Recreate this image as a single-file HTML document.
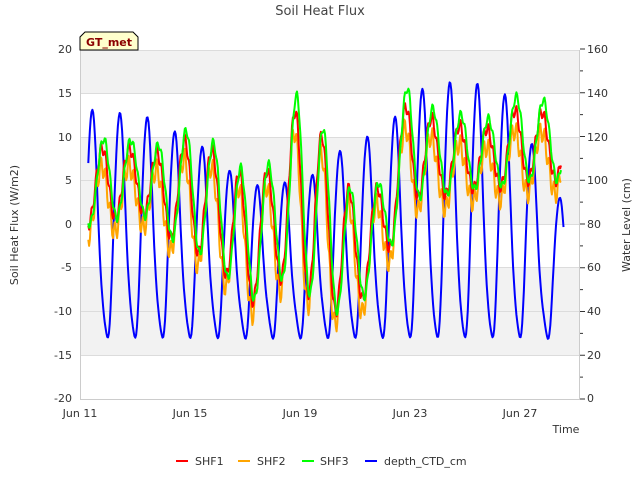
<!DOCTYPE html>
<html><head><meta charset="utf-8"><style>
body{margin:0;background:#fff;}
svg{display:block;font-family:"DejaVu Sans","Liberation Sans",sans-serif;}
</style></head><body>
<svg id="s" width="640" height="480" viewBox="0 0 640 480">
<rect width="640" height="480" fill="#fff"/>
<rect x="80" y="50" width="500" height="44" fill="#f2f2f2"/>
<rect x="80" y="137" width="500" height="87" fill="#f2f2f2"/>
<rect x="80" y="268" width="500" height="87" fill="#f2f2f2"/>
<g stroke="#dcdcdc" stroke-width="1">
<line x1="80" x2="580" y1="93.5" y2="93.5"/><line x1="80" x2="580" y1="137.5" y2="137.5"/>
<line x1="80" x2="580" y1="180.5" y2="180.5"/><line x1="80" x2="580" y1="224.5" y2="224.5"/>
<line x1="80" x2="580" y1="267.5" y2="267.5"/><line x1="80" x2="580" y1="311.5" y2="311.5"/>
<line x1="80" x2="580" y1="355.5" y2="355.5"/><line x1="80" x2="580" y1="50.5" y2="50.5"/>
</g>
<g id="lines" fill="none" stroke-width="2" stroke-linejoin="round"></g>
<g stroke="#ccc" fill="none"><line x1="80.5" y1="50" x2="80.5" y2="399"/><line x1="80" y1="399.5" x2="580" y2="399.5"/><line x1="579.5" y1="50" x2="579.5" y2="399"/></g>
<g stroke="#333" id="rt"></g>
<g font-size="11" fill="#333" text-anchor="end">
<text x="72" y="53">20</text><text x="72" y="97">15</text><text x="72" y="141">10</text><text x="72" y="184">5</text><text x="72" y="228">0</text><text x="72" y="271">-5</text><text x="72" y="315">-10</text><text x="72" y="359">-15</text><text x="72" y="402">-20</text>
</g>
<g font-size="11" fill="#333">
<text x="587" y="53">160</text><text x="587" y="97">140</text><text x="587" y="141">120</text><text x="587" y="184">100</text><text x="587" y="228">80</text><text x="587" y="271">60</text><text x="587" y="315">40</text><text x="587" y="359">20</text><text x="587" y="402">0</text>
</g>
<g font-size="11" fill="#333" text-anchor="middle">
<text x="80" y="417">Jun 11</text><text x="190" y="417">Jun 15</text><text x="300" y="417">Jun 19</text><text x="410" y="417">Jun 23</text><text x="520" y="417">Jun 27</text>
<text x="566" y="433">Time</text>
<text x="320" y="15" font-size="13" fill="#444">Soil Heat Flux</text>
<text transform="translate(18,225) rotate(-90)">Soil Heat Flux (W/m2)</text>
<text transform="translate(630,225) rotate(-90)">Water Level (cm)</text>
</g>
<path d="M80,50 V37 L85,32 H133 L138,37 V50 Z" fill="#ffffcc" stroke="#000"/>
<text x="109" y="46" font-size="11" font-weight="bold" fill="#8b0000" text-anchor="middle">GT_met</text>
<g font-size="11" fill="#333">
<line x1="176" x2="188" y1="461" y2="461" stroke="#f00" stroke-width="2"/><text x="195" y="465">SHF1</text>
<line x1="238" x2="250" y1="461" y2="461" stroke="#ffa500" stroke-width="2"/><text x="257" y="465">SHF2</text>
<line x1="302" x2="314" y1="461" y2="461" stroke="#0f0" stroke-width="2"/><text x="320" y="465">SHF3</text>
<line x1="365" x2="377" y1="461" y2="461" stroke="#00f" stroke-width="2"/><text x="384" y="465">depth_CTD_cm</text>
</g>
</svg>
<script>
var NS="http://www.w3.org/2000/svg";
var rt=document.getElementById('rt');
for(var i=0;i<=16;i++){var y=399-i*350/16;var l=document.createElementNS(NS,'line');l.setAttribute('x1',580);l.setAttribute('x2',i%2?583:585);l.setAttribute('y1',y);l.setAttribute('y2',y);rt.appendChild(l);}
function Y(v){return 224-v*8.75;}
function X(d){return 80+(d-11)*27.5;}
var gp=[8,10,9.5,9,11,9,6,7,16,10,3,5,17,12.5,12.5,12,15,14];
var gt=[0,0,2,-1,-3,-4,-10,-6,-7,-10,-10,-5,3,3,4,4,5,5];
var bp=[13.5,12.5,13,11.3,9.7,7.8,4,5,4.5,7,10,10,15,16,16.5,15.5,14,3];
function interp(a,d){var i=Math.floor(d-11),f=d-11-i;var a0=a[Math.max(0,Math.min(a.length-1,i))],a1=a[Math.max(0,Math.min(a.length-1,i+1))];return a0+(a1-a0)*f;}
function series(col,fn,t0,t1){var p=[];for(var d=t0;d<=t1;d+=0.03){p.push(X(d).toFixed(1)+','+Y(fn(d)).toFixed(1));}
var e=document.createElementNS(NS,'polyline');e.setAttribute('points',p.join(' '));e.setAttribute('stroke',col);document.getElementById('lines').appendChild(e);}
function flux(d,ph,sc,n){var pk=interp(gp,d)*sc,tr=interp(gt,d);var c=Math.cos(2*Math.PI*(d-11.2-ph));var v=tr+(pk-tr)*(0.5+0.5*c);v+=n*Math.sin(d*37)*1.2;return v;}
series('#00f',function(d){var pk=interp(bp,d);var c=Math.cos(2*Math.PI*(d-11.45));var s=Math.pow(0.5+0.5*c,1.3);return -12.3+(pk+12.3)*s+1.5*Math.sin(4*Math.PI*(d-11.2))*(1-s);},11.3,28.6);
series('#ffa500',function(d){return flux(d,0.58,0.85,1)-1.5;},11.3,28.5);
series('#f00',function(d){return flux(d,0.6,0.9,0.6);},11.3,28.5);
series('#0f0',function(d){return flux(d,0.65,1,0.4);},11.3,28.5);
</script>
</body></html>
